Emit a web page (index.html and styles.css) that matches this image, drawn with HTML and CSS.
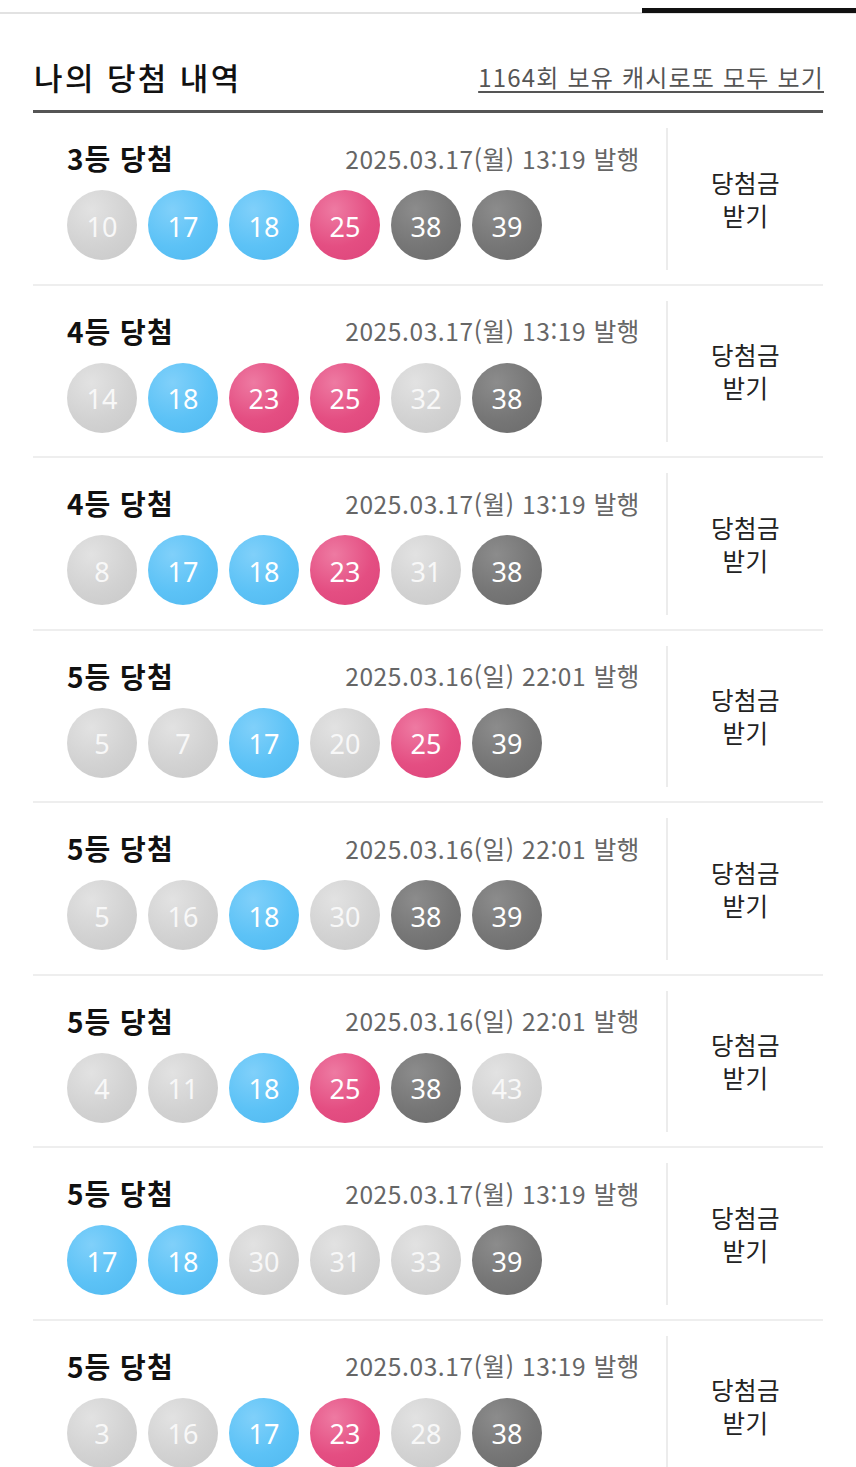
FILE: index.html
```html
<!DOCTYPE html>
<html lang="ko">
<head>
<meta charset="utf-8">
<title>나의 당첨 내역</title>
<link rel="stylesheet" href="styles.css">
</head>
<body>
<div class="topbar"><div class="topbar-active"></div></div>
<main class="wrap">
  <header class="head">
    <h2 class="head-title">나의 당첨 내역</h2>
    <a class="head-link" href="#">1164회 보유 캐시로또 모두 보기</a>
  </header>
  <ul class="list">
    <li class="row">
      <div class="info">
        <div class="info-top"><span class="rank">3등 당첨</span><span class="date">2025.03.17(월) 13:19 발행</span></div>
        <div class="balls"><span class="ball g">10</span><span class="ball b">17</span><span class="ball b">18</span><span class="ball p">25</span><span class="ball d">38</span><span class="ball d">39</span></div>
      </div>
      <div class="action">당첨금<br>받기</div>
    </li>
    <li class="row">
      <div class="info">
        <div class="info-top"><span class="rank">4등 당첨</span><span class="date">2025.03.17(월) 13:19 발행</span></div>
        <div class="balls"><span class="ball g">14</span><span class="ball b">18</span><span class="ball p">23</span><span class="ball p">25</span><span class="ball g">32</span><span class="ball d">38</span></div>
      </div>
      <div class="action">당첨금<br>받기</div>
    </li>
    <li class="row">
      <div class="info">
        <div class="info-top"><span class="rank">4등 당첨</span><span class="date">2025.03.17(월) 13:19 발행</span></div>
        <div class="balls"><span class="ball g">8</span><span class="ball b">17</span><span class="ball b">18</span><span class="ball p">23</span><span class="ball g">31</span><span class="ball d">38</span></div>
      </div>
      <div class="action">당첨금<br>받기</div>
    </li>
    <li class="row">
      <div class="info">
        <div class="info-top"><span class="rank">5등 당첨</span><span class="date">2025.03.16(일) 22:01 발행</span></div>
        <div class="balls"><span class="ball g">5</span><span class="ball g">7</span><span class="ball b">17</span><span class="ball g">20</span><span class="ball p">25</span><span class="ball d">39</span></div>
      </div>
      <div class="action">당첨금<br>받기</div>
    </li>
    <li class="row">
      <div class="info">
        <div class="info-top"><span class="rank">5등 당첨</span><span class="date">2025.03.16(일) 22:01 발행</span></div>
        <div class="balls"><span class="ball g">5</span><span class="ball g">16</span><span class="ball b">18</span><span class="ball g">30</span><span class="ball d">38</span><span class="ball d">39</span></div>
      </div>
      <div class="action">당첨금<br>받기</div>
    </li>
    <li class="row">
      <div class="info">
        <div class="info-top"><span class="rank">5등 당첨</span><span class="date">2025.03.16(일) 22:01 발행</span></div>
        <div class="balls"><span class="ball g">4</span><span class="ball g">11</span><span class="ball b">18</span><span class="ball p">25</span><span class="ball d">38</span><span class="ball g">43</span></div>
      </div>
      <div class="action">당첨금<br>받기</div>
    </li>
    <li class="row">
      <div class="info">
        <div class="info-top"><span class="rank">5등 당첨</span><span class="date">2025.03.17(월) 13:19 발행</span></div>
        <div class="balls"><span class="ball b">17</span><span class="ball b">18</span><span class="ball g">30</span><span class="ball g">31</span><span class="ball g">33</span><span class="ball d">39</span></div>
      </div>
      <div class="action">당첨금<br>받기</div>
    </li>
    <li class="row">
      <div class="info">
        <div class="info-top"><span class="rank">5등 당첨</span><span class="date">2025.03.17(월) 13:19 발행</span></div>
        <div class="balls"><span class="ball g">3</span><span class="ball g">16</span><span class="ball b">17</span><span class="ball p">23</span><span class="ball g">28</span><span class="ball d">38</span></div>
      </div>
      <div class="action">당첨금<br>받기</div>
    </li>
  </ul>
</main>
</body>
</html>
```
FILE: styles.css
```css
* { box-sizing: border-box; }
html, body { margin: 0; padding: 0; background: #fff; }
body {
  font-family: "Noto Sans CJK KR", "Noto Sans", sans-serif;
  color: #111;
  height: 1467px;
  overflow: hidden;
}
.topbar {
  height: 14px;
  border-bottom: 2px solid #e2e2e2;
  display: flex;
  justify-content: flex-end;
  align-items: flex-end;
}
.topbar-active {
  width: 214px;
  height: 5px;
  margin-bottom: -1px;
  background: #111;
}
.wrap { padding: 0 33px; }
.head {
  display: flex;
  justify-content: space-between;
  align-items: center;
  height: 99px;
  padding-top: 28px;
  border-bottom: 3px solid #555;
}
.head-title {
  margin: 0;
  font-size: 31px;
  font-weight: 500;
  letter-spacing: 2.4px;
  padding-left: 1px;
  color: #111;
}
.head-link {
  font-size: 24px;
  color: #555;
  text-decoration: underline;
  text-underline-offset: 4px;
  text-decoration-thickness: 2px;
  letter-spacing: 1.2px;
  margin-right: -1px;
}
.list { list-style: none; margin: 0; padding: 0; }
.row {
  display: flex;
  height: 172.5px;
  border-bottom: 2px solid #eeeeee;
}
.info {
  width: 633px;
  padding: 26px 26px 0 34px;
}
.info-top {
  display: flex;
  justify-content: space-between;
  align-items: center;
  height: 38px;
}
.rank { font-size: 28px; font-weight: 700; color: #111; letter-spacing: 1px; }
.date { font-size: 24.5px; color: #666; letter-spacing: 0.6px; }
.balls {
  display: flex;
  gap: 11px;
  margin-top: 13px;
}
.ball {
  width: 70px;
  height: 70px;
  border-radius: 50%;
  display: flex;
  align-items: center;
  justify-content: center;
  color: #fff;
  font-family: "Noto Sans", "Noto Sans CJK KR", sans-serif;
  font-size: 27px;
  font-weight: 400;
  padding-top: 2px;
}
.ball.g { background: radial-gradient(circle at 35% 28%, #e2e2e2 0%, #d2d2d2 55%, #c8c8c8 100%); color: #f8f8f8; }
.ball.b { background: radial-gradient(circle at 35% 28%, #80d0fa 0%, #5cc2f6 55%, #50b8ef 100%); }
.ball.p { background: radial-gradient(circle at 35% 28%, #ee7aa2 0%, #e44e82 55%, #dc447a 100%); }
.ball.d { background: radial-gradient(circle at 35% 28%, #8c8c8c 0%, #767676 55%, #6a6a6a 100%); }
.action {
  flex: 1;
  margin: 15px 0 14px;
  border-left: 2px solid #ececec;
  display: flex;
  align-items: center;
  justify-content: center;
  text-align: center;
  font-size: 24.5px;
  line-height: 33px;
  color: #222;
  letter-spacing: 0.5px;
}
```
